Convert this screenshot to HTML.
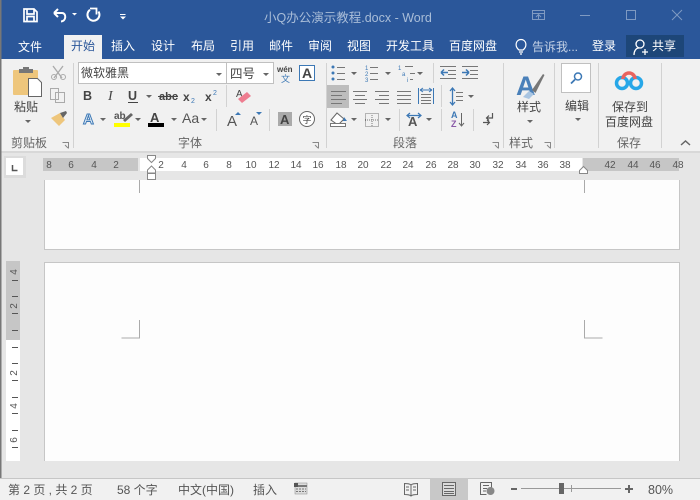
<!DOCTYPE html>
<html lang="zh"><head><meta charset="utf-8"><title>小Q办公演示教程.docx - Word</title>
<style>
html,body{margin:0;padding:0;width:700px;height:500px;overflow:hidden;background:#e6e6e6}
svg{display:block}
text{font-family:"Liberation Sans","Noto Sans CJK SC",sans-serif;font-size:12px;fill:#444}
.t text{fill:#fff}
.r text{font-size:10px;fill:#555;text-anchor:middle}
.tri{fill:#666}
</style></head><body>
<svg width="700" height="500" viewBox="0 0 700 500" xmlns="http://www.w3.org/2000/svg">
<rect width="700" height="500" fill="#e6e6e6"/>
<rect width="700" height="59" fill="#2b579a"/>
<rect y="59" width="700" height="93" fill="#f1f1f1"/>
<rect y="151" width="700" height="2" fill="#d8d8d8"/>
<!-- Quick access -->
<path d="M24 9h10l3 3v9.500H24z M27 9v5h7V9 M27 21.500v-5h7v5" fill="none" stroke="#fff" stroke-width="1.700"/>
<path d="M54 13h8c4.500 0 4.500 8-1 8.500M54 13l4-4M54 13l4 4" fill="none" stroke="#fff" stroke-width="2"/>
<path d="M72 13h5l-2.500 2.500z" fill="#fff"/>
<path d="M90 9.800A6 6 0 1 0 98.500 11.500" fill="none" stroke="#fff" stroke-width="2"/>
<path d="M90 8.500h6.500v6" fill="none" stroke="#fff" stroke-width="1.800"/>
<path d="M120 14.500h5.500" stroke="#fff" stroke-width="1"/><path d="M120 16.500h6l-3 3z" fill="#fff"/>
<text x="264" y="22" style="fill:#a9bdd8;font-size:12.500px">小Q办公演示教程.docx - Word</text>
<!-- window buttons -->
<g fill="none" stroke="#7f9ac2" stroke-width="1">
<path d="M532.500 10.500h12v9h-12zM532.500 13.500h12M538.500 19v-4M536 17l2.500-2.500 2.500 2.500"/>
<path d="M580 15.500h10"/>
<rect x="626.500" y="10.500" width="9" height="9"/>
<path d="M672 10l10 10M682 10l-10 10"/>
</g>
<!-- tabs -->
<rect x="64" y="35" width="38" height="24" fill="#f1f1f1"/>
<g class="t">
<text x="18" y="51">文件</text><text x="111" y="50">插入</text><text x="151" y="50">设计</text><text x="191" y="50">布局</text><text x="230" y="50">引用</text><text x="269" y="50">邮件</text><text x="308" y="50">审阅</text><text x="347" y="50">视图</text><text x="386" y="50">开发工具</text><text x="449" y="50">百度网盘</text><text x="592" y="50">登录</text>
<rect x="626" y="35" width="58" height="22" fill="#1d4678"/>
<text x="652" y="50">共享</text>
<text x="532" y="51" style="fill:#c5d2e5">告诉我...</text>
</g>
<text x="71" y="50" style="fill:#2b579a">开始</text>
<path d="M519 50c-5-4-3-10.500 2-10.500s7 6.500 2 10.500zM519 52h4M520 54h2" fill="none" stroke="#fff" stroke-width="1.200"/>
<circle cx="640" cy="44" r="4" fill="none" stroke="#fff" stroke-width="1.300"/>
<path d="M634 55c0-4 2-7 5-7M642 52h6M645 49v6" fill="none" stroke="#fff" stroke-width="1.300"/>
<!-- group separators -->
<g stroke="#d2d2d2"><path d="M73.500 63v85M326.500 63v85M503.500 63v85M554.500 63v85M598.500 63v85M661.500 63v85"/><path d="M226.500 85v22M216.500 109v22M269.500 109v22M433.500 63v20M441.500 85v22M399.500 109v22M441.500 109v22M473.500 109v22"/></g>
<!-- clipboard -->
<rect x="13" y="70" width="25" height="25" rx="1" fill="#eec67c"/>
<rect x="19" y="69" width="14" height="4" fill="#777"/><rect x="23" y="67" width="6" height="3" fill="#777"/>
<path d="M28.500 78.500h9l4 4v14h-13z" fill="#fff" stroke="#666"/>
<text x="14" y="111" style="font-size:12px">粘贴</text>
<path d="M25 120h6l-3 3z" class="tri"/>
<path d="M53 66l9 12M63 66l-9 12" fill="none" stroke="#aaa" stroke-width="1.300"/><circle cx="54" cy="77" r="2.500" fill="none" stroke="#aaa"/><circle cx="63" cy="77" r="2.500" fill="none" stroke="#aaa"/>
<path d="M50.500 88.500h8v11h-8zM55.500 92.500h9v10h-9z" fill="#f1f1f1" stroke="#aaa"/>
<path d="M51 118l9-5 5 7-6 6z" fill="#eec67c"/><path d="M60 113l6-2 1 2-4 5z" fill="#666"/>
<text x="11" y="147" style="font-size:12px;fill:#666">剪贴板</text>
<path d="M62.500 142.500h6v6M65 145l3 3" fill="none" stroke="#888"/>
<!-- font -->
<rect x="78.500" y="62.500" width="148" height="21" fill="#fff" stroke="#c0c0c0"/>
<rect x="226.500" y="62.500" width="47" height="21" fill="#fff" stroke="#c0c0c0"/>
<text x="81" y="77" style="font-size:12px">微软雅黑</text><text x="230" y="78" style="font-size:12.500px">四号</text>
<path d="M216 73h6l-3 3zM263 73h6l-3 3z" class="tri"/>
<text x="277" y="72" style="font-size:8px;font-weight:bold">wén</text><text x="281" y="82" style="font-size:9px;fill:#3c78b5">文</text>
<rect x="299.500" y="65.500" width="15" height="15" fill="#fff" stroke="#3c78b5"/>
<text x="302" y="78" style="font-family:'Liberation Sans';font-weight:bold;font-size:14px">A</text>
<text x="83" y="100" style="font-family:'Liberation Sans';font-weight:bold;font-size:12.500px">B</text>
<text x="108" y="100" style="font-family:'Liberation Serif';font-style:italic;font-size:14px">I</text>
<text x="128" y="100" style="font-family:'Liberation Sans';font-weight:bold;font-size:12.500px">U</text>
<path d="M128 102.500h10" stroke="#444"/>
<path d="M146 95h6l-3 3z" class="tri"/>
<text x="159" y="100" style="font-family:'Liberation Sans';font-weight:bold;font-size:11px">abc</text><path d="M158 96.500h20" stroke="#444"/>
<text x="183" y="101" style="font-family:'Liberation Sans';font-weight:bold;font-size:12px">x</text><text x="191" y="103" style="font-family:'Liberation Sans';font-size:7px;fill:#3c78b5">2</text>
<text x="205" y="101" style="font-family:'Liberation Sans';font-weight:bold;font-size:12px">x</text><text x="213" y="95" style="font-family:'Liberation Sans';font-size:7px;fill:#3c78b5">2</text>
<text x="236" y="97" style="font-family:'Liberation Sans';font-size:10px">A</text>
<path d="M238 99l9-7 4 4-9 7z" fill="#ee7d90"/>
<text x="83" y="124" style="font-family:'Liberation Sans';font-size:15px;font-weight:bold;fill:#e8f0f8;stroke:#3c78b5;stroke-width:1">A</text>
<path d="M100 118h6l-3 3zM135 118h6l-3 3zM171 118h6l-3 3z" class="tri"/>
<text x="114" y="119" style="font-family:'Liberation Sans';font-size:10px;font-weight:bold;fill:#555">ab</text>
<path d="M123 120l8-7 2 2-8 7z" fill="#666"/>
<rect x="114" y="123" width="16" height="4" fill="#ff0"/>
<text x="150" y="122" style="font-family:'Liberation Sans';font-weight:bold;font-size:13px">A</text>
<rect x="148" y="123" width="16" height="4" fill="#000"/>
<text x="182" y="123" style="font-family:'Liberation Sans';font-size:14px;fill:#555">Aa</text>
<path d="M201 118h6l-3 3z" class="tri"/>
<text x="227" y="126" style="font-family:'Liberation Sans';font-size:15px;fill:#555">A</text><path d="M235 115h6l-3-3z" fill="#3c78b5"/>
<text x="250" y="125" style="font-family:'Liberation Sans';font-size:12px;fill:#555">A</text><path d="M256 112h6l-3 3z" fill="#3c78b5"/>
<rect x="278" y="112" width="14" height="14" fill="#aaa"/><text x="280" y="124" style="font-family:'Liberation Sans';font-weight:bold;font-size:13px">A</text>
<circle cx="307" cy="119" r="7.500" fill="#fff" stroke="#666"/><text x="302.500" y="123" style="font-size:9px">字</text>
<text x="178" y="147" style="font-size:12px;fill:#666">字体</text>
<path d="M312.500 142.500h6v6M315 145l3 3" fill="none" stroke="#888"/>
<!-- paragraph -->
<g fill="#3c78b5"><circle cx="333" cy="67" r="1.500"/><circle cx="333" cy="73" r="1.500"/><circle cx="333" cy="79" r="1.500"/></g>
<path d="M337 67.500h8M337 73.500h8M337 79.500h8M370 67.500h8M370 73.500h8M370 79.500h8M405 66.500h8M410 73.500h5M410 79.500h3" stroke="#777" fill="none"/>
<text x="365" y="70" style="font-family:'Liberation Sans';font-size:6px;fill:#3c78b5">1</text><text x="365" y="76" style="font-family:'Liberation Sans';font-size:6px;fill:#3c78b5">2</text><text x="365" y="82" style="font-family:'Liberation Sans';font-size:6px;fill:#3c78b5">3</text><text x="398" y="70" style="font-family:'Liberation Sans';font-size:6px;fill:#3c78b5">1</text><text x="402" y="76" style="font-family:'Liberation Sans';font-size:6px;fill:#3c78b5">a</text><text x="407" y="82" style="font-family:'Liberation Sans';font-size:6px;fill:#3c78b5">i</text>
<path d="M351 72h6l-3 3zM385 72h6l-3 3zM417 72h6l-3 3z" class="tri"/>
<path d="M440 66.500h16M448 70.500h8M448 74.500h8M440 78.500h16M462 66.500h16M470 70.500h8M470 74.500h8M462 78.500h16" stroke="#777" fill="none"/>
<path d="M441 72.500h7M441 72.500l3-3M441 72.500l3 3M462 72.500h7M469 72.500l-3-3M469 72.500l-3 3" stroke="#3c78b5" fill="none" stroke-width="1.500"/>
<rect x="327" y="85" width="22" height="23" fill="#bdbdbd"/>
<path d="M331 91.500h15M331 95.500h11M331 99.500h15M331 103.500h11" stroke="#777"/>
<path d="M353 91.500h14M355 95.500h10M353 99.500h14M355 103.500h10M375 91.500h14M379 95.500h10M375 99.500h14M379 103.500h10M397 91.500h14M397 95.500h14M397 99.500h14M397 103.500h14" stroke="#777" fill="none"/>
<path d="M418.500 88v16M433.500 88v16M420 90h12M420 90l3-2M432 90l-3-2M420 90l3 2M432 90l-3 2" stroke="#3c78b5" fill="none"/>
<path d="M421 94.500h10M421 97.500h10M421 100.500h10M421 103.500h10" stroke="#777"/>
<path d="M452.500 89v15M450 91l2.500-3 2.500 3M450 102l2.500 3 2.500-3" stroke="#3c78b5" fill="none" stroke-width="1.300"/>
<path d="M456 92.500h7M456 96.500h7M456 100.500h7" stroke="#777"/><path d="M468 95h6l-3 3z" class="tri"/>
<path d="M331 120l6-7 7 6-6 6z" fill="#fff" stroke="#666"/><path d="M344 117l3 4h-4z" fill="#3c78b5"/><rect x="330.500" y="123.500" width="15" height="3" fill="#fff" stroke="#777"/>
<path d="M351 118h6l-3 3zM385 118h6l-3 3zM426 118h6l-3 3z" class="tri"/>
<path d="M365.500 113.500h13v13h-13zM372 113v14M365 120h14" fill="none" stroke="#777" stroke-dasharray="1 1"/>
<text x="408" y="126" style="font-family:'Liberation Sans';font-weight:bold;font-size:13px;fill:#555">A</text>
<path d="M410 113l-3 2.500 3 2.500M418 113l3 2.500-3 2.500M407 115.500h14" fill="none" stroke="#3c78b5" stroke-width="1.200"/>
<text x="451" y="118" style="font-family:'Liberation Sans';font-size:9px;font-weight:bold;fill:#3c78b5">A</text><text x="451" y="127" style="font-family:'Liberation Sans';font-size:9px;font-weight:bold;fill:#8a5aa8">Z</text>
<path d="M461.500 113v13M459 123l2.500 3 2.500-3" fill="none" stroke="#666"/>
<path d="M492.500 113v5h-6M489 115.500l-2.500 2.500 2.500 2.500M483 122.500h6M487 120l2.500 2.500-2.500 2.500" fill="none" stroke="#555" stroke-width="1.200"/>
<text x="393" y="147" style="font-size:12px;fill:#666">段落</text>
<path d="M492.500 142.500h6v6M495 145l3 3" fill="none" stroke="#888"/>
<!-- styles -->
<text x="516" y="95" style="font-family:'Liberation Sans';font-weight:bold;font-size:27px;fill:#4a80b9">A</text>
<path d="M532 90l11-16 1.500 1-9 18z" fill="#777"/><path d="M523 97l6-6 5 3-5 5z" fill="#a9c5e2"/>
<text x="517" y="111" style="font-size:12px">样式</text>
<path d="M527 120h6l-3 3z" class="tri"/>
<text x="509" y="147" style="font-size:12px;fill:#666">样式</text>
<path d="M544.500 142.500h6v6M547 145l3 3" fill="none" stroke="#888"/>
<!-- edit -->
<rect x="561.500" y="63.500" width="29" height="29" fill="#fff" stroke="#c0c0c0"/>
<circle cx="578" cy="76.500" r="3.500" fill="none" stroke="#3c78b5" stroke-width="1.500"/><path d="M575 79.500l-4 4" stroke="#3c78b5" stroke-width="1.800"/>
<text x="565" y="110" style="font-size:12px">编辑</text>
<path d="M575 118h6l-3 3z" class="tri"/>
<!-- save -->
<circle cx="622" cy="83" r="5.500" fill="none" stroke="#27a7e8" stroke-width="3.500"/>
<circle cx="636" cy="83" r="5.500" fill="none" stroke="#27a7e8" stroke-width="3.500"/>
<path d="M623 79a6 6 0 1 1 12 0" fill="none" stroke="#e9645f" stroke-width="3.500"/>
<text x="612" y="111" style="font-size:12px">保存到</text><text x="605" y="126" style="font-size:12px">百度网盘</text>
<text x="617" y="147" style="font-size:12px;fill:#666">保存</text>
<path d="M681 145l4.500-4 4.500 4" fill="none" stroke="#666" stroke-width="1.500"/>
<!-- ruler corner -->
<rect x="4" y="156" width="22" height="22" fill="#dcdcdc"/><rect x="6" y="158" width="17" height="17" fill="#fff"/>
<path d="M12.500 165v5.500h5" fill="none" stroke="#555" stroke-width="1.500"/>
<!-- h ruler -->
<rect x="43" y="158" width="95" height="13" fill="#c6c6c6"/>
<rect x="583" y="158" width="96" height="13" fill="#c6c6c6"/>
<rect x="140" y="158" width="442" height="13" fill="#fff"/>
<g class="r">
<text x="49" y="168">8</text><text x="71" y="168">6</text><text x="94" y="168">4</text><text x="116" y="168">2</text>
<text x="161" y="168">2</text><text x="184" y="168">4</text><text x="206" y="168">6</text><text x="229" y="168">8</text>
<text x="251" y="168">10</text><text x="274" y="168">12</text><text x="296" y="168">14</text><text x="318" y="168">16</text><text x="341" y="168">18</text><text x="363" y="168">20</text><text x="386" y="168">22</text><text x="408" y="168">24</text><text x="431" y="168">26</text><text x="453" y="168">28</text><text x="475" y="168">30</text><text x="498" y="168">32</text><text x="521" y="168">34</text><text x="543" y="168">36</text><text x="565" y="168">38</text>
<text x="610" y="168">42</text><text x="633" y="168">44</text><text x="655" y="168">46</text><text x="678" y="168">48</text>
</g>
<path d="M147.500 155.500h8v3l-4 4-4-4z" fill="#fff" stroke="#888"/>
<path d="M147.500 173v-3l4-4 4 4v3zM147.500 173.500h8v6h-8z" fill="#fff" stroke="#888"/>
<path d="M579.500 173.500v-3l4-4 4 4v3z" fill="#fff" stroke="#888"/>
<!-- v ruler -->
<rect x="6" y="261" width="14" height="200" fill="#fff"/>
<rect x="6" y="261" width="14" height="79" fill="#c6c6c6"/>
<path d="M12 280.500h6M12 296.500h6M12 313.500h6M12 330.500h6M12 347.500h6M12 363.500h6M12 380.500h6M12 397.500h6M12 413.500h6M12 430.500h6M12 447.500h6" stroke="#555"/>
<text transform="translate(17,272) rotate(-90)" style="font-family:'Liberation Sans';font-size:10px;fill:#555" text-anchor="middle">4</text><text transform="translate(17,306) rotate(-90)" style="font-family:'Liberation Sans';font-size:10px;fill:#555" text-anchor="middle">2</text><text transform="translate(17,373) rotate(-90)" style="font-family:'Liberation Sans';font-size:10px;fill:#555" text-anchor="middle">2</text><text transform="translate(17,406) rotate(-90)" style="font-family:'Liberation Sans';font-size:10px;fill:#555" text-anchor="middle">4</text><text transform="translate(17,440) rotate(-90)" style="font-family:'Liberation Sans';font-size:10px;fill:#555" text-anchor="middle">6</text>
<!-- pages -->
<path d="M44.500 180v69.500h635V180" fill="#fdfdfd" stroke="#c6c6c6"/>
<path d="M44.500 461v-198.500h635V461" fill="#fdfdfd" stroke="#c6c6c6"/>
<path d="M139.500 180v13M584.500 180v13M139.500 320v18h-18M584.500 320v18h18" fill="none" stroke="#aaa"/>
<!-- left edge -->
<rect width="1.500" height="500" y="0" fill="#777"/>
<!-- status -->
<rect y="478" width="700" height="22" fill="#f1f1f1"/><rect y="478" width="700" height="1" fill="#c6c6c6"/>
<text x="8" y="494" style="fill:#555">第 2 页 , 共 2 页</text><text x="117" y="494" style="fill:#555">58 个字</text><text x="178" y="494" style="fill:#555">中文(中国)</text><text x="253" y="494" style="fill:#555">插入</text>
<rect x="295" y="483" width="12" height="11" fill="#ddd" stroke="#888" stroke-width=".5"/><rect x="294" y="483" width="4" height="4" fill="#555"/><rect x="298" y="485" width="9" height="2" fill="#777"/><path d="M296 489h10M296 491.500h10" stroke="#777" stroke-dasharray="2 1"/>
<rect x="430" y="478" width="38" height="22" fill="#c8c8c8"/>
<path d="M404.500 483.500c3 0 5 0 6.500 1.500 1.500-1.500 3.500-1.500 6.500-1.500v11c-3 0-5 0-6.500 1.500-1.500-1.500-3.500-1.500-6.500-1.500zM411 485v11M406 487h3M406 490h3M413 487h3M413 490h3" fill="none" stroke="#666"/>
<path d="M442.500 482.500h13v13h-13zM444 485.500h10M444 488.500h10M444 491.500h10M444 493.500h10" fill="#dadada" stroke="#666"/>
<path d="M480.500 482.500h11v6M480.500 482.500v12h6M483 485.500h6M483 488.500h4M483 491h3" fill="none" stroke="#666"/><circle cx="490.500" cy="491" r="4" fill="#888"/>
<rect x="511" y="488" width="6" height="2" fill="#666"/>
<rect x="521" y="488" width="100" height="1" fill="#999"/>
<rect x="559" y="483" width="5" height="11" fill="#666"/>
<rect x="571" y="485" width="1" height="7" fill="#999"/>
<path d="M625 489h8M629 485v8" stroke="#666" stroke-width="2"/>
<text x="648" y="494" style="font-size:12.500px;fill:#555">80%</text>
</svg>
</body></html>
